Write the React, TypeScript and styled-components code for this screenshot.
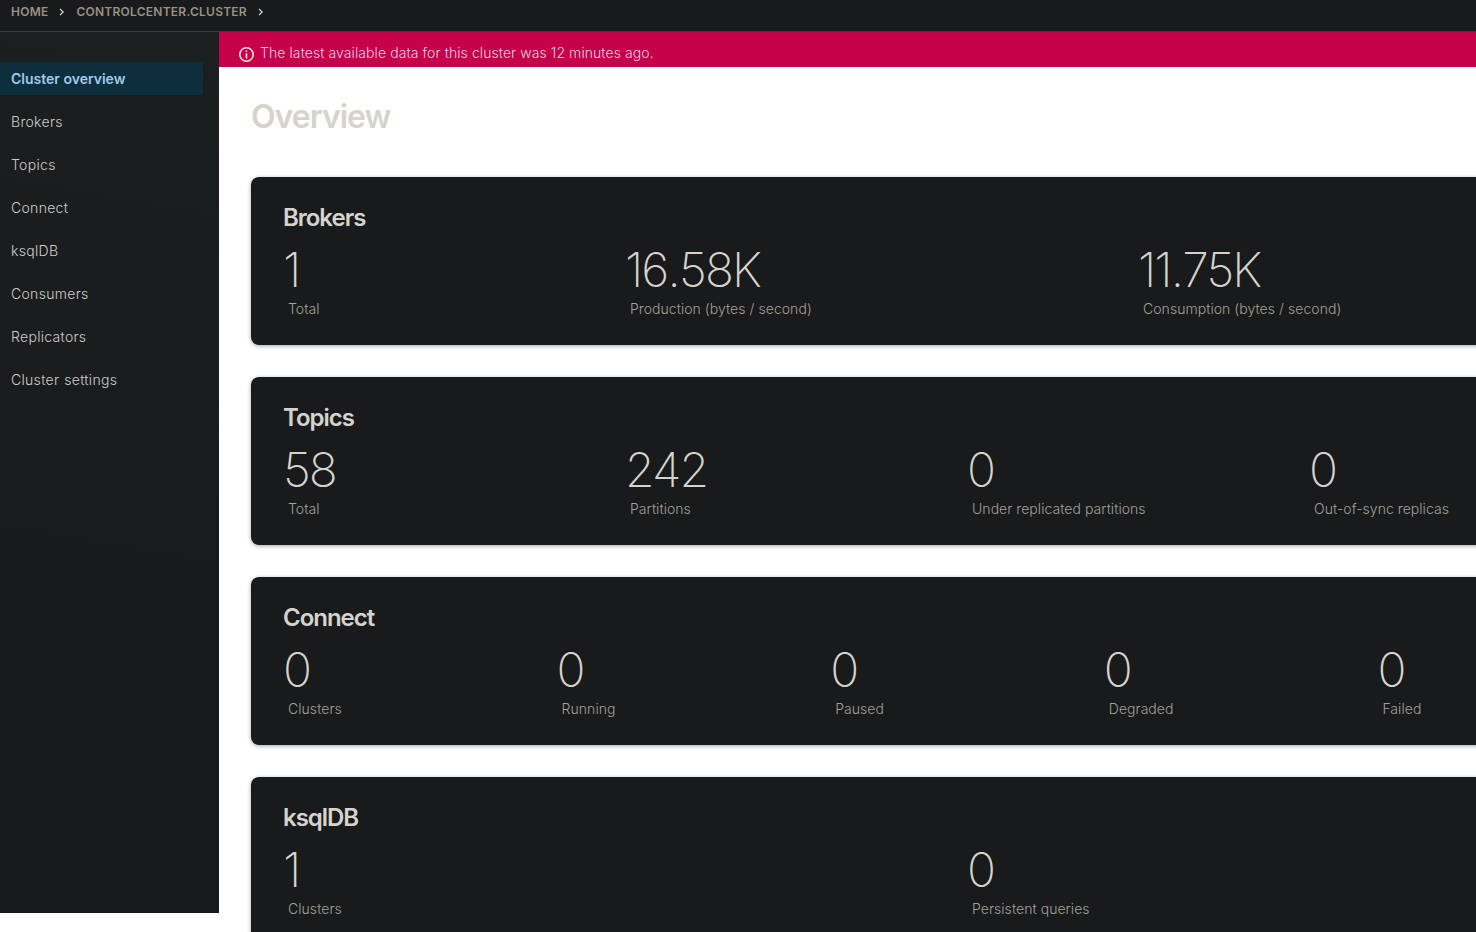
import React from "react";
import styled, { createGlobalStyle } from "styled-components";

const GlobalStyle = createGlobalStyle`
  * { box-sizing: border-box; }
  html, body { margin: 0; height: 100%; overflow: hidden; background: #fff; }
  body { font-family: Inter, sans-serif; font-size: 14px; }
`;

const Page = styled.div`
  height: 932px;
  width: 1476px;
  overflow: hidden;
  display: flex;
  flex-direction: column;
`;

const TopBar = styled.nav`
  height: 32px;
  flex: none;
  background: #191a1b;
  border-bottom: 1px solid #3b3c3d;
  display: flex;
  align-items: flex-start;
  padding: 4px 0 0 11px;
`;

const Crumb = styled.a`
  font-size: 12px;
  line-height: 16px;
  font-weight: 600;
  letter-spacing: 0.24px;
  color: #989184;
  text-transform: uppercase;
`;

const Chevron = styled.svg`
  width: 6px;
  height: 8px;
  margin: 4px 11px 0 11px;
`;

const Body = styled.div`
  flex: 1;
  min-height: 0;
  display: flex;
`;

const Sidebar = styled.aside`
  width: 219px;
  height: 881px;
  flex: none;
  background: linear-gradient(190deg, #1b1f20 0%, #1a1c1d 35%, #191a1b 60%);
  padding-top: 30px;
  display: flex;
  flex-direction: column;
  gap: 10px;
`;

const NavItem = styled.a<{ $active?: boolean }>`
  height: 33px;
  width: 203px;
  padding-left: 11px;
  line-height: 33px;
  font-size: 14px;
  font-weight: ${(p) => (p.$active ? 600 : 300)};
  letter-spacing: ${(p) => (p.$active ? "0" : "0.3px")};
  word-spacing: ${(p) => (p.$active ? "0" : "0.8px")};
  color: ${(p) => (p.$active ? "#a3c9ee" : "#d0cdc8")};
  background: ${(p) => (p.$active ? "#0c2f3b" : "transparent")};
`;

const Main = styled.main`
  flex: 1;
  min-width: 0;
`;

const Banner = styled.div`
  height: 35px;
  background: #c60049;
  color: #dfd2e4;
  display: flex;
  padding: 11px 0 0 20px;
  gap: 6px;
  font-weight: 300;
  line-height: 20px;
  letter-spacing: 0.08px;
`;

const InfoIcon = styled.svg`
  width: 15px;
  height: 15px;
  margin-top: 4px;
`;

const Title = styled.h1`
  margin: 0;
  padding: 30px 0 0 32px;
  height: 110px;
  font-size: 32px;
  line-height: 40px;
  font-weight: 600;
  letter-spacing: -1px;
  color: #d6d3cd;
`;

const Cards = styled.div`
  padding-left: 32px;
  display: flex;
  flex-direction: column;
  gap: 32px;
`;

const Card = styled.section`
  width: 1432px;
  height: 168px;
  border-radius: 8px;
  background: #191a1b;
  box-shadow: 0 1px 4px rgba(0, 0, 0, 0.35);
  padding: 24px 32px 0;
`;

const CardTitle = styled.h2`
  margin: 0;
  font-size: 24px;
  line-height: 34px;
  font-weight: 600;
  letter-spacing: -1.02px;
  color: #d6d3cd;
`;

const Metrics = styled.div<{ $columns: string }>`
  display: grid;
  grid-template-columns: ${(p) => p.$columns};
`;

const Value = styled.div`
  font-size: 48px;
  line-height: 60px;
  padding-top: 5px;
  height: 64px;
  font-weight: 200;
  letter-spacing: -1.92px;
  color: #d6d3cd;
`;

const Point = styled.span`
  letter-spacing: -1.6px;
`;

const Label = styled.div`
  padding-left: 5px;
  line-height: 20px;
  font-weight: 300;
  letter-spacing: 0.05px;
  color: #a5a097;
`;

const nav = ["Cluster overview", "Brokers", "Topics", "Connect", "ksqlDB", "Consumers", "Replicators", "Cluster settings"];

const sections = [
  { title: "Brokers", columns: "342px 513px 513px", metrics: [["1", "Total"], ["16.58K", "Production (bytes / second)"], ["11.75K", "Consumption (bytes / second)"]] },
  { title: "Topics", columns: "repeat(4, 342px)", metrics: [["58", "Total"], ["242", "Partitions"], ["0", "Under replicated partitions"], ["0", "Out-of-sync replicas"]] },
  { title: "Connect", columns: "repeat(5, 273.6px)", metrics: [["0", "Clusters"], ["0", "Running"], ["0", "Paused"], ["0", "Degraded"], ["0", "Failed"]] },
  { title: "ksqlDB", columns: "repeat(2, 684px)", metrics: [["1", "Clusters"], ["0", "Persistent queries"]] },
];

const Separator = () => (
  <Chevron viewBox="0 0 6 8" fill="none" stroke="#d8d4cc" strokeWidth="1.3">
    <path d="M1 0.9 L4.1 4 L1 7.1" />
  </Chevron>
);

const Metric = ({ value, label }: { value: string; label: string }) => {
  const [whole, fraction] = value.split(".");
  return (
    <div>
      <Value>
        {whole}
        {fraction && <Point>.</Point>}
        {fraction}
      </Value>
      <Label>{label}</Label>
    </div>
  );
};

export default function App() {
  return (
    <Page>
      <GlobalStyle />
      <TopBar>
        <Crumb>Home</Crumb>
        <Separator />
        <Crumb>controlcenter.cluster</Crumb>
        <Separator />
      </TopBar>
      <Body>
        <Sidebar>
          {nav.map((n, i) => (
            <NavItem key={n} $active={i === 0}>{n}</NavItem>
          ))}
        </Sidebar>
        <Main>
          <Banner>
            <InfoIcon viewBox="0 0 15 15" fill="none" stroke="#f2e6e6" strokeWidth="1.6">
              <circle cx="7.5" cy="7.5" r="6.7" />
              <path d="M7.5 6.2 V11.6 M7.5 3.4 V5.1" />
            </InfoIcon>
            <span>The latest available data for this cluster was 12 minutes ago.</span>
          </Banner>
          <Title>Overview</Title>
          <Cards>
            {sections.map((s) => (
              <Card key={s.title}>
                <CardTitle>{s.title}</CardTitle>
                <Metrics $columns={s.columns}>
                  {s.metrics.map(([v, l]) => (
                    <Metric key={l} value={v} label={l} />
                  ))}
                </Metrics>
              </Card>
            ))}
          </Cards>
        </Main>
      </Body>
    </Page>
  );
}
